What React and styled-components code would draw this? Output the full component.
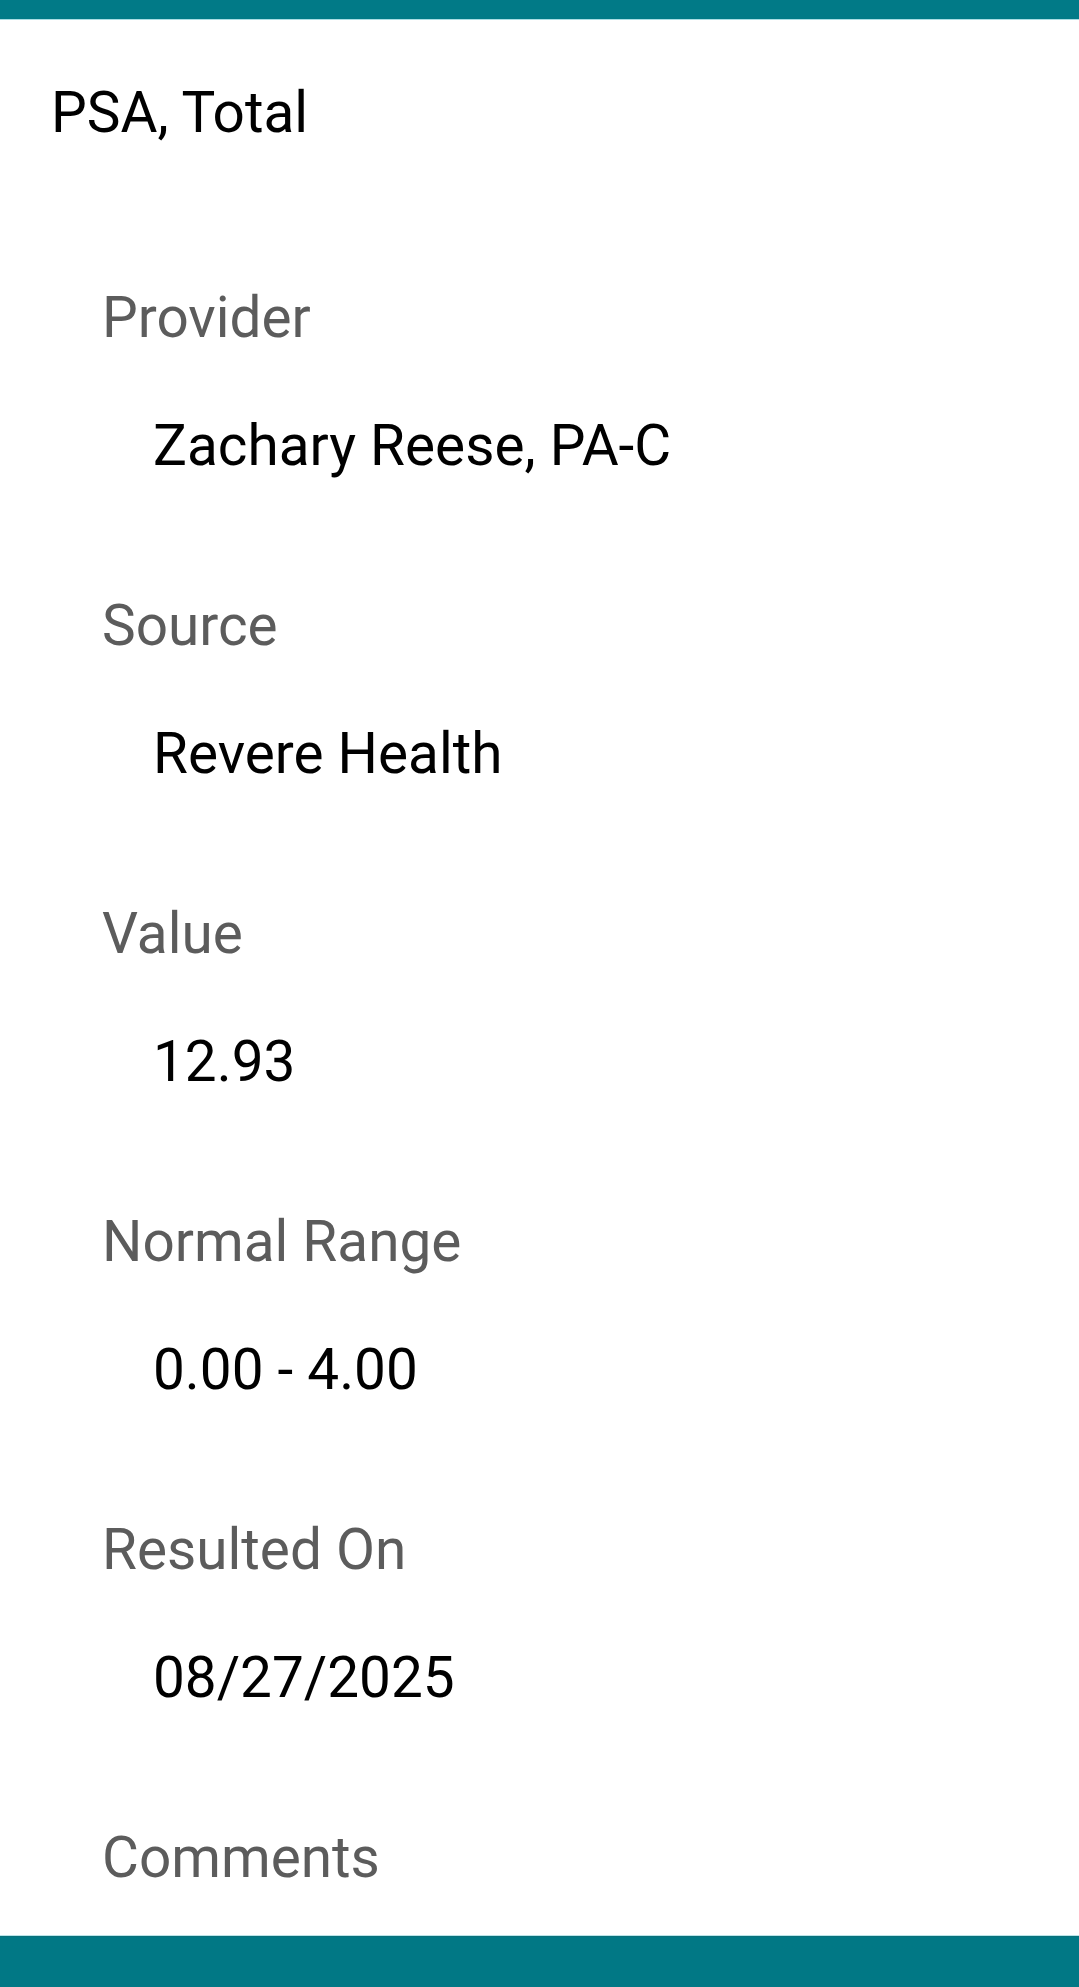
import React from 'react';
import styled, { createGlobalStyle } from 'styled-components';

const GlobalStyle = createGlobalStyle`
  html, body {
    margin: 0;
    padding: 0;
    background: #ffffff;
  }
  body {
    font-family: Roboto, "Noto Sans", "Liberation Sans", sans-serif;
  }
`;

const Screen = styled.div`
  display: flex;
  flex-direction: column;
  width: 1079px;
  height: 1987px;
  overflow: hidden;
  background: #ffffff;
`;

const TopBar = styled.header`
  flex: 0 0 19px;
  background: #017a87;
  border-bottom: 1px solid #a9dde3;
`;

const BottomBar = styled.nav`
  flex: 0 0 51px;
  background: #017885;
  border-top: 1px solid #b9e4e8;
  box-shadow: inset 0 1px 0 #0b6f7a;
`;

const Content = styled.main`
  flex: 1;
  overflow: hidden;
  padding: 61px 0 0 51px;
`;

const Title = styled.h1`
  margin: 0 0 141px;
  font-size: 56.7px;
  font-weight: 400;
  line-height: 64px;
  color: #000000;
`;

const FieldList = styled.dl`
  margin: 0 0 0 51px;
  display: flex;
  flex-direction: column;
  gap: 116px;
`;

const Field = styled.div`
  display: flex;
  flex-direction: column;
  gap: 64px;
`;

const Label = styled.dt`
  font-size: 56.7px;
  line-height: 64px;
  color: #5c5c5c;
`;

const Value = styled.dd`
  margin: 0 0 0 51px;
  font-size: 56.7px;
  line-height: 64px;
  color: #000000;
  min-height: 64px;
`;

const fields = [
  { label: 'Provider', value: 'Zachary Reese, PA-C' },
  { label: 'Source', value: 'Revere Health' },
  { label: 'Value', value: '12.93' },
  { label: 'Normal Range', value: '0.00 - 4.00' },
  { label: 'Resulted On', value: '08/27/2025' },
  { label: 'Comments', value: '' },
];

export default function App() {
  return (
    <>
      <GlobalStyle />
      <Screen>
        <TopBar />
        <Content>
          <Title>PSA, Total</Title>
          <FieldList>
            {fields.map((f) => (
              <Field key={f.label}>
                <Label>{f.label}</Label>
                <Value>{f.value}</Value>
              </Field>
            ))}
          </FieldList>
        </Content>
        <BottomBar />
      </Screen>
    </>
  );
}
